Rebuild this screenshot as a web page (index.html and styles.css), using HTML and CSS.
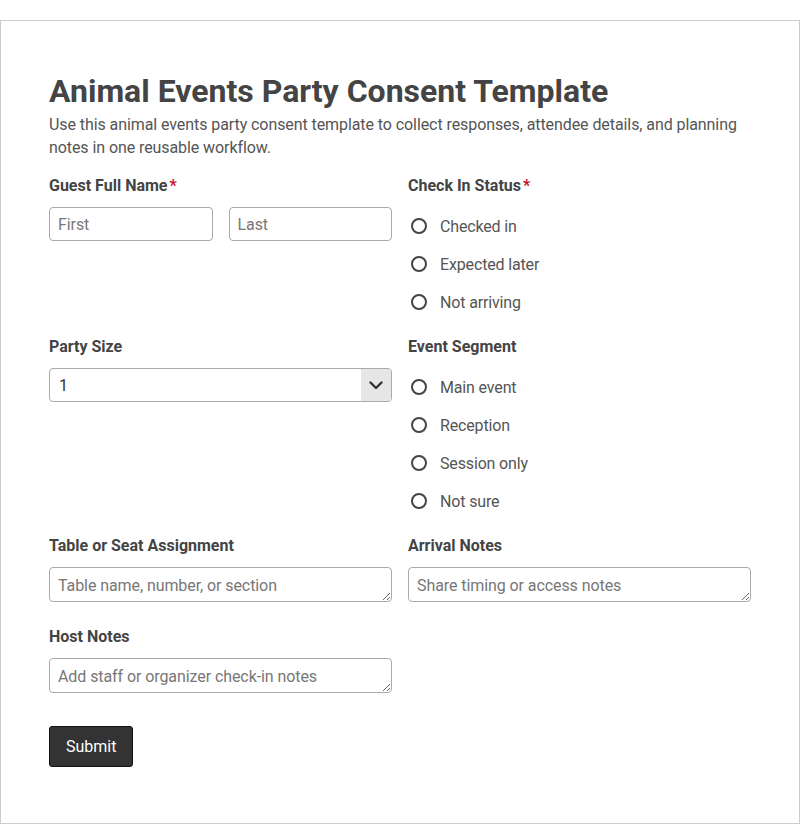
FILE: index.html
```html
<!DOCTYPE html>
<html lang="en">
<head>
  <meta charset="UTF-8">
  <meta name="viewport" content="width=device-width, initial-scale=1.0">
  <title>Animal Events Party Consent Template</title>
  <link rel="stylesheet" href="styles.css">
</head>
<body>
  <div class="form-card">
    <h1 class="form-title">Animal Events Party Consent Template</h1>
    <p class="form-intro">Use this animal events party consent template to collect responses, attendee details, and planning notes in one reusable workflow.</p>

    <form class="form-grid" onsubmit="return false;">
      <div class="field">
        <label class="field-label">Guest Full Name<span class="req">*</span></label>
        <div class="name-pair">
          <input class="text-input" type="text" placeholder="First">
          <input class="text-input" type="text" placeholder="Last">
        </div>
      </div>

      <div class="field">
        <label class="field-label">Check In Status<span class="req">*</span></label>
        <div class="radio-list">
          <label class="radio-item"><input type="radio" name="status"> Checked in</label>
          <label class="radio-item"><input type="radio" name="status"> Expected later</label>
          <label class="radio-item"><input type="radio" name="status"> Not arriving</label>
        </div>
      </div>

      <div class="field">
        <label class="field-label">Party Size</label>
        <div class="select-wrap">
          <select class="select-input">
            <option>1</option>
            <option>2</option>
            <option>3</option>
            <option>4</option>
            <option>5+</option>
          </select>
          <span class="select-arrow">
            <svg width="14" height="9" viewBox="0 0 14 9"><path d="M1.5 1.5 L7 7 L12.5 1.5" fill="none" stroke="#333" stroke-width="2.4" stroke-linecap="round" stroke-linejoin="round"/></svg>
          </span>
        </div>
      </div>

      <div class="field">
        <label class="field-label">Event Segment</label>
        <div class="radio-list">
          <label class="radio-item"><input type="radio" name="segment"> Main event</label>
          <label class="radio-item"><input type="radio" name="segment"> Reception</label>
          <label class="radio-item"><input type="radio" name="segment"> Session only</label>
          <label class="radio-item"><input type="radio" name="segment"> Not sure</label>
        </div>
      </div>

      <div class="field">
        <label class="field-label">Table or Seat Assignment</label>
        <textarea class="text-area" rows="1" placeholder="Table name, number, or section"></textarea>
      </div>

      <div class="field">
        <label class="field-label">Arrival Notes</label>
        <textarea class="text-area" rows="1" placeholder="Share timing or access notes"></textarea>
      </div>

      <div class="field">
        <label class="field-label">Host Notes</label>
        <textarea class="text-area" rows="1" placeholder="Add staff or organizer check-in notes"></textarea>
      </div>

      <div class="form-actions">
        <button class="submit-btn" type="submit">Submit</button>
      </div>
    </form>
  </div>
</body>
</html>
```

FILE: styles.css
```css
body {
  font-family: Roboto, "Liberation Sans", Arial, sans-serif;
  background-color: #fff;
  margin: 0;
  padding: 20px 0 0;
  color: #444;
}

.form-card {
  border: 1px solid #ccc;
  padding: 51px 48px 56px;
  background-color: #fff;
}

.form-title {
  margin: 0;
  font-size: 32px;
  line-height: 38px;
  font-weight: 700;
  color: #444;
}

.form-intro {
  margin: 3px 0 17px;
  font-size: 16px;
  line-height: 23px;
  letter-spacing: -0.08px;
  color: #555;
}

.form-grid {
  display: grid;
  grid-template-columns: 1fr 1fr;
  column-gap: 16px;
  row-gap: 25px;
  align-items: start;
}

.field-label {
  display: block;
  font-size: 16px;
  line-height: 20px;
  font-weight: 700;
  color: #444;
  margin-bottom: 11px;
}

.req {
  color: #c8102e;
  margin-left: 2px;
}

.name-pair {
  display: flex;
  gap: 16px;
}

.text-input,
.text-area,
.select-input {
  box-sizing: border-box;
  width: 100%;
  height: 34px;
  border: 1px solid #aaa;
  border-radius: 4px;
  padding: 6px 8px;
  font-family: inherit;
  font-size: 16px;
  color: #333;
  background-color: #fff;
}

.text-input::placeholder,
.text-area::placeholder {
  color: #777;
  letter-spacing: -0.08px;
}

.text-area {
  display: block;
  height: 35px;
  padding: 8px 8px 5px;
  resize: vertical;
  line-height: 20px;
}

/* Radio groups */
.radio-list {
  display: flex;
  flex-direction: column;
  gap: 18px;
  padding-top: 9px;
}

.radio-item {
  display: flex;
  align-items: center;
  height: 20px;
  font-size: 16px;
  letter-spacing: -0.15px;
  color: #555;
}

.radio-item input {
  appearance: none;
  -webkit-appearance: none;
  width: 16px;
  height: 16px;
  margin: 0 13px 0 3px;
  border: 2px solid #444;
  border-radius: 50%;
  box-sizing: border-box;
  background-color: #fff;
}

.radio-item input:checked {
  background-color: #444;
  box-shadow: inset 0 0 0 2px #fff;
}

/* Select */
.select-wrap {
  position: relative;
}

.select-input {
  appearance: none;
  -webkit-appearance: none;
  padding: 6px 40px 6px 9px;
}

.select-arrow {
  position: absolute;
  top: 1px;
  right: 1px;
  bottom: 1px;
  width: 30px;
  background-color: #e6e6e6;
  border-radius: 0 3px 3px 0;
  display: flex;
  align-items: center;
  justify-content: center;
  pointer-events: none;
}

.form-actions {
  grid-column: 1 / -1;
  margin-top: 8px;
}

.submit-btn {
  height: 41px;
  padding: 0 16px;
  background-color: #333;
  color: #fff;
  border: 1px solid #111;
  border-radius: 3px;
  font-family: inherit;
  font-size: 16px;
  cursor: pointer;
}

.submit-btn:hover {
  background-color: #222;
}
```
